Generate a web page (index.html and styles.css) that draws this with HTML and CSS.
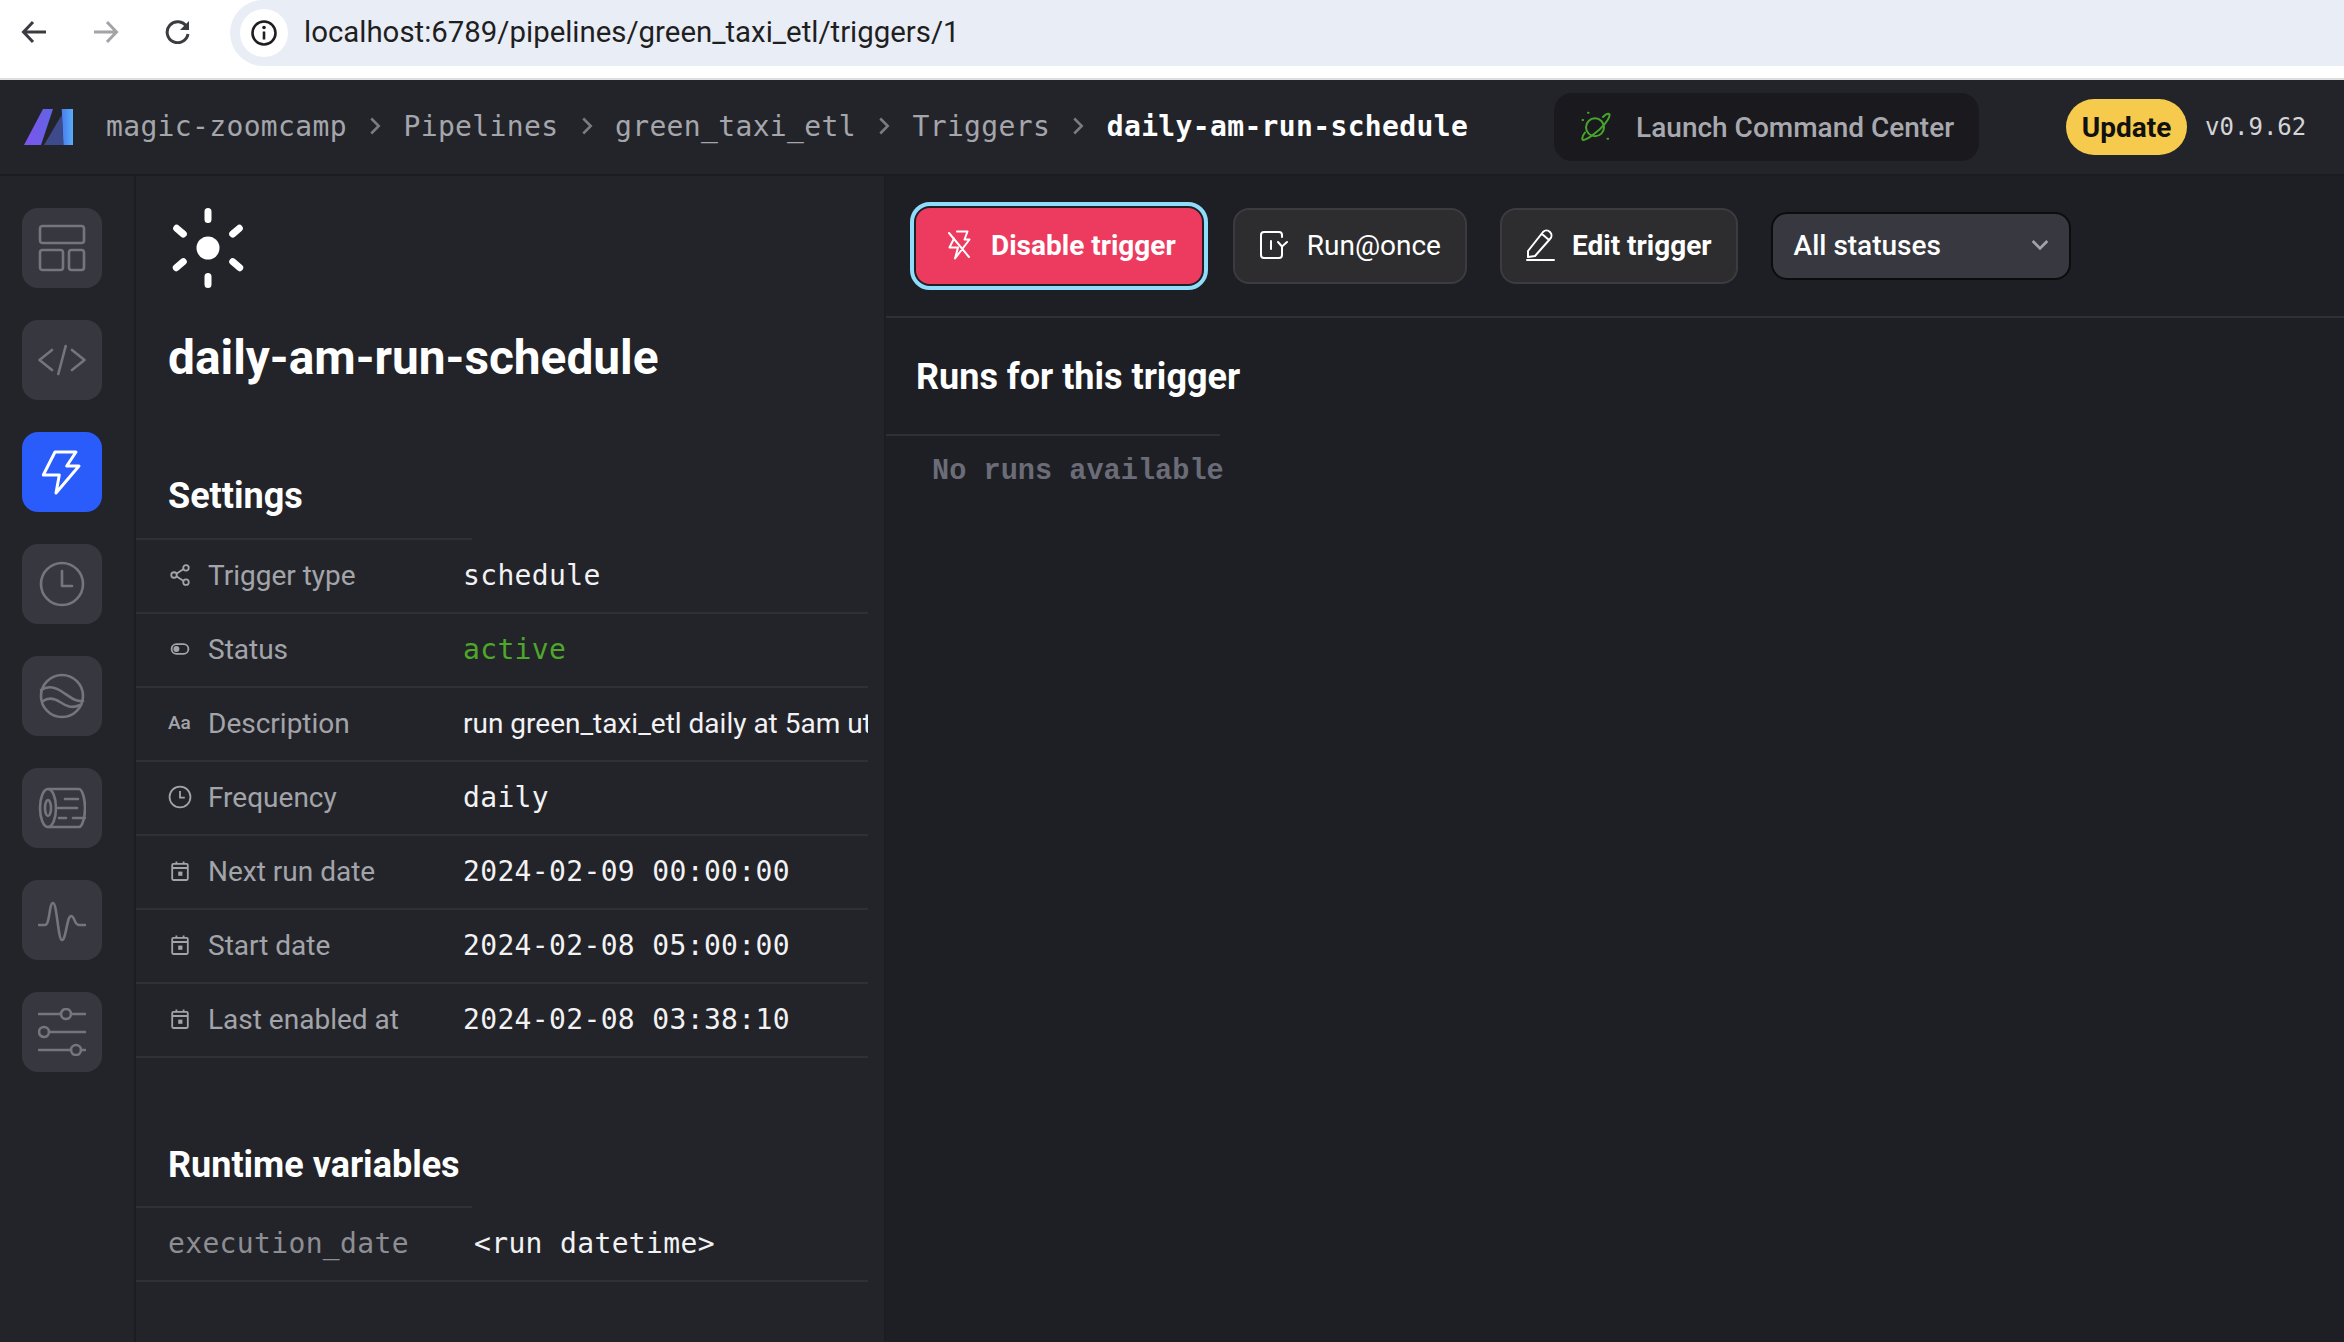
FILE: index.html
```html
<!DOCTYPE html>
<html lang="en">
<head>
    <meta charset="UTF-8">
    <title>daily-am-run-schedule</title>
    <link rel="stylesheet" href="styles.css">
</head>
<body>
    <!-- browser toolbar -->
    <div class="browser-bar">
        <svg class="nav-icon back" viewBox="0 0 26 24"><path d="M25 12H3M12 2 2.500 12 12 22"/></svg>
        <svg class="nav-icon forward" viewBox="0 0 26 24"><path d="M1 12h22M14 2l9.500 10L14 22"/></svg>
        <svg class="nav-icon reload" viewBox="0 0 26 24"><path d="M21.500 6.500A10.500 10.500 0 1 0 23 14"/><path class="fill-dark" d="M24 1v9h-9z"/></svg>
        <div class="address">
            <span class="site-info">
                <svg viewBox="0 0 28 28"><circle cx="14" cy="14" r="11.500"/><path d="M14 12.500v8"/><circle class="dot" cx="14" cy="8.500" r="1.800"/></svg>
            </span>
            <span class="url">localhost:6789/pipelines/green_taxi_etl/triggers/1</span>
        </div>
    </div>

    <!-- app header -->
    <header class="app-header">
        <svg class="logo" viewBox="0 0 49 38">
            <defs>
                <linearGradient id="logoLeft" x1="0" y1="0" x2="1" y2="0"><stop offset="0" stop-color="#7f52ee"/><stop offset="1" stop-color="#5f66e4"/></linearGradient>
                <linearGradient id="logoRight" x1="0" y1="0" x2="1" y2="0"><stop offset="0" stop-color="#4a7cf0"/><stop offset="1" stop-color="#58aef8"/></linearGradient>
            </defs>
            <path fill="url(#logoLeft)" d="M0 37 19 1h10L17 37z"/>
            <path fill="#3d4a8c" d="M20 37 37.700 7 39.500 37z"/>
            <path fill="url(#logoRight)" d="M37.700 1H49v36h-9.500z"/>
        </svg>
        <nav class="breadcrumbs">
            <span>magic-zoomcamp</span>
            <svg class="crumb-sep" viewBox="0 0 10 16"><path d="M2 2l6 6-6 6"/></svg>
            <span>Pipelines</span>
            <svg class="crumb-sep" viewBox="0 0 10 16"><path d="M2 2l6 6-6 6"/></svg>
            <span>green_taxi_etl</span>
            <svg class="crumb-sep" viewBox="0 0 10 16"><path d="M2 2l6 6-6 6"/></svg>
            <span>Triggers</span>
            <svg class="crumb-sep" viewBox="0 0 10 16"><path d="M2 2l6 6-6 6"/></svg>
            <span class="current">daily-am-run-schedule</span>
        </nav>
        <div class="command-center">
            <svg viewBox="0 0 30 32">
                <circle cx="14" cy="16.300" r="9"/>
                <path d="M22 6C26 2 29 2 28.500 4.500 28 9 20 18 13 23 7 28 2 30 1.500 28.500 1 27 2 24 4 21.500"/>
                <path d="M7 1.700h.6M1.500 9h.6M26.500 27.700h.6"/>
            </svg>
            <span>Launch Command Center</span>
        </div>
        <span class="update-pill">Update</span>
        <span class="version">v0.9.62</span>
    </header>

    <div class="main">
        <!-- icon sidebar -->
        <aside class="sidebar">
            <a class="side-btn">
                <svg viewBox="0 0 48 48"><rect x="2" y="2" width="44" height="17" rx="2.500"/><rect x="2" y="26" width="23" height="20" rx="2.500"/><rect x="31" y="26" width="15" height="20" rx="2.500"/></svg>
            </a>
            <a class="side-btn">
                <svg viewBox="0 0 48 48"><path d="M14 14 1.500 24 14 34M34 14l12.500 10L34 34M27.700 10l-7.400 28"/></svg>
            </a>
            <a class="side-btn active">
                <svg viewBox="0 0 48 48"><path d="M17 4h21L28.700 18H41L18 45l3.300-18h-16z"/></svg>
            </a>
            <a class="side-btn">
                <svg viewBox="0 0 48 48"><circle cx="24" cy="24" r="21"/><path d="M24 11v15h10"/></svg>
            </a>
            <a class="side-btn">
                <svg viewBox="0 0 48 48"><circle cx="24" cy="24" r="21"/><path d="M3 18c6-4 12-4 20 1s14 11 22 10M5 29c6-4 11-3 17 1s12 7 20 3"/></svg>
            </a>
            <a class="side-btn">
                <svg viewBox="0 0 48 48"><path d="M10 5h31c3 0 6 9 6 19s-3 19-6 19H10"/><ellipse cx="10" cy="24" rx="8" ry="19"/><ellipse cx="10" cy="24" rx="3" ry="8"/><path d="M27 15h13M20 24h19M21 34h7M35 34h12"/></svg>
            </a>
            <a class="side-btn">
                <svg viewBox="0 0 48 48"><path d="M1 29h6c5 0 4-22 8-22s5 37 9 37 5-24 9-24c4 0 3 9 8 9h6"/></svg>
            </a>
            <a class="side-btn">
                <svg viewBox="0 0 48 48"><path d="M1 6h22M33 6h14M11 24h36M1 42h32M43 42h4"/><circle cx="28" cy="6" r="5"/><circle cx="6" cy="24" r="5"/><circle cx="38" cy="42" r="5"/></svg>
            </a>
        </aside>

        <!-- trigger details -->
        <section class="detail-panel">
            <svg class="sun" viewBox="0 0 80 80">
                <circle cx="40" cy="40" r="11.500"/>
                <path d="M40 3.500v8M40 68.500v8M8.700 20.300l6.600 5.700M71.300 20.300 64.700 26M8.300 59.700l7-6M71.700 59.700l-7-6"/>
            </svg>
            <h1 class="trigger-name">daily-am-run-schedule</h1>

            <h2 class="section-title">Settings</h2>
            <div class="row">
                <span class="row-label">
                    <svg class="row-icon" viewBox="0 0 20 20"><circle cx="15" cy="4" r="2.300"/><circle cx="5" cy="10" r="2.300"/><circle cx="15" cy="16" r="2.300"/><path d="M7 9l6-4M7 11l6 4"/></svg>
                    Trigger type
                </span>
                <span class="row-value mono">schedule</span>
            </div>
            <div class="row">
                <span class="row-label">
                    <svg class="row-icon" viewBox="0 0 20 20"><rect x="3" y="6" width="14" height="8" rx="4"/><circle class="dot" cx="7" cy="10" r="2.500"/></svg>
                    Status
                </span>
                <span class="row-value mono active-text">active</span>
            </div>
            <div class="row">
                <span class="row-label">
                    <span class="row-icon aa">Aa</span>
                    Description
                </span>
                <span class="row-value">run green_taxi_etl daily at 5am utc</span>
            </div>
            <div class="row">
                <span class="row-label">
                    <svg class="row-icon" viewBox="0 0 20 20"><circle cx="10" cy="10" r="8.700"/><path d="M10 5v5.500h4"/></svg>
                    Frequency
                </span>
                <span class="row-value mono">daily</span>
            </div>
            <div class="row">
                <span class="row-label">
                    <svg class="row-icon" viewBox="0 0 20 20"><rect x="3.500" y="4" width="13" height="13.500" rx="1"/><path d="M3.500 7.500h13M7 2v2M13 2v2"/><rect class="dot" x="8.500" y="10.500" width="3.500" height="3.500"/></svg>
                    Next run date
                </span>
                <span class="row-value mono">2024-02-09 00:00:00</span>
            </div>
            <div class="row">
                <span class="row-label">
                    <svg class="row-icon" viewBox="0 0 20 20"><rect x="3.500" y="4" width="13" height="13.500" rx="1"/><path d="M3.500 7.500h13M7 2v2M13 2v2"/><rect class="dot" x="8.500" y="10.500" width="3.500" height="3.500"/></svg>
                    Start date
                </span>
                <span class="row-value mono">2024-02-08 05:00:00</span>
            </div>
            <div class="row">
                <span class="row-label">
                    <svg class="row-icon" viewBox="0 0 20 20"><rect x="3.500" y="4" width="13" height="13.500" rx="1"/><path d="M3.500 7.500h13M7 2v2M13 2v2"/><rect class="dot" x="8.500" y="10.500" width="3.500" height="3.500"/></svg>
                    Last enabled at
                </span>
                <span class="row-value mono">2024-02-08 03:38:10</span>
            </div>

            <h2 class="section-title runtime">Runtime variables</h2>
            <div class="row">
                <span class="var-name mono">execution_date</span>
                <span class="var-value mono">&lt;run datetime&gt;</span>
            </div>
        </section>

        <!-- runs -->
        <section class="runs-panel">
            <div class="action-bar">
                <button class="btn btn-disable">
                    <svg viewBox="0 0 24 32"><path d="M10 2.500h10.500l-3 8h5L8 29.500l3-11H2.500L7 9.500M2 4l20 24"/></svg>
                    Disable trigger
                </button>
                <button class="btn btn-run">
                    <svg viewBox="0 0 30 30"><path d="M23 7V5a3 3 0 0 0-3-3H5a3 3 0 0 0-3 3v20a3 3 0 0 0 3 3h15a3 3 0 0 0 3-3v-8M12 11v8M28 12l-5 4.500-4-4.500"/></svg>
                    Run@once
                </button>
                <button class="btn btn-edit">
                    <svg viewBox="0 0 30 32"><path d="M2 22 17 3c2-2 5-2 7 0s2 5 0 7L9 27l-7 1zM16 5l7 6M1 31h27"/></svg>
                    Edit trigger
                </button>
                <div class="status-select">
                    <span>All statuses</span>
                    <svg viewBox="0 0 16 10"><path d="M1.500 1.500 8 8l6.500-6.500"/></svg>
                </div>
            </div>
            <h2 class="runs-title">Runs for this trigger</h2>
            <p class="no-runs">No runs available</p>
        </section>
    </div>
</body>
</html>
```

FILE: styles.css
```css
* {
    margin: 0;
    padding: 0;
    box-sizing: border-box;
}

html, body {
    width: 2344px;
    height: 1342px;
    overflow: hidden;
}

body {
    background: #1e1f24;
    font-family: Roboto, 'Liberation Sans', sans-serif;
    color: #fff;
}

.mono {
    font-family: 'DejaVu Sans Mono', monospace;
}

/* browser toolbar */
.browser-bar {
    display: flex;
    align-items: flex-start;
    height: 80px;
    background: #fff;
    border-bottom: 2px solid #dfdfdf;
}

.nav-icon {
    width: 26px;
    height: 24px;
    margin-top: 20px;
    fill: none;
    stroke: #3a3c40;
    stroke-width: 3;
}

.nav-icon.back {
    margin-left: 21px;
}

.nav-icon.forward {
    margin-left: 46px;
    stroke: #a3a4a7;
}

.nav-icon.reload {
    margin-left: 46px;
}

.nav-icon .fill-dark {
    fill: #3a3c40;
    stroke: none;
}

.address {
    display: flex;
    align-items: center;
    flex: 1;
    height: 66px;
    margin-left: 39px;
    padding-left: 10px;
    background: #e9edf6;
    border-radius: 33px 0 0 33px;
}

.site-info {
    display: flex;
    align-items: center;
    justify-content: center;
    width: 48px;
    height: 48px;
    background: #fff;
    border-radius: 50%;
}

.site-info svg {
    width: 28px;
    height: 28px;
    fill: none;
    stroke: #1f1f1f;
    stroke-width: 2.6;
}

.site-info .dot {
    fill: #1f1f1f;
    stroke: none;
}

.url {
    margin-left: 16px;
    padding-bottom: 2px;
    font-size: 29.400px;
    color: #1f1f1f;
}

/* app header */
.app-header {
    display: flex;
    align-items: center;
    height: 96px;
    padding-left: 24px;
    background: #23242a;
    border-bottom: 2px solid #1b1c20;
}

.logo {
    width: 49px;
    height: 38px;
    flex-shrink: 0;
}

.breadcrumbs {
    display: flex;
    align-items: center;
    gap: 21.300px;
    margin-left: 33px;
    padding-bottom: 2px;
    font-family: 'DejaVu Sans Mono', monospace;
    font-size: 28px;
    letter-spacing: 0.35px;
    color: #a5a6ac;
}

.crumb-sep {
    width: 14px;
    height: 20px;
    fill: none;
    stroke: #7b7c83;
    stroke-width: 2;
}

.breadcrumbs .current {
    color: #fff;
    font-weight: 700;
}

.command-center {
    display: flex;
    align-items: center;
    gap: 25px;
    width: 425px;
    height: 68px;
    margin-left: 86px;
    padding-left: 27px;
    background: #1a1a1e;
    border-radius: 18px;
    font-size: 28px;
    font-weight: 500;
    color: #a8a9af;
}

.command-center svg {
    width: 30px;
    height: 32px;
    fill: none;
    stroke: #47a52c;
    stroke-width: 2;
    stroke-linecap: round;
}

.update-pill {
    display: flex;
    align-items: center;
    justify-content: center;
    width: 121px;
    height: 56px;
    margin-left: 87px;
    background: #f6ca4c;
    border-radius: 28px;
    font-size: 28px;
    font-weight: 700;
    color: #111;
}

.version {
    margin-left: 18px;
    font-family: 'DejaVu Sans Mono', monospace;
    font-size: 24px;
    color: #d4d4d8;
}

/* layout */
.main {
    display: flex;
    height: 1166px;
}

.sidebar {
    display: flex;
    flex-direction: column;
    gap: 32px;
    width: 136px;
    padding: 32px 0 0 22px;
    background: #232429;
    border-right: 2px solid #1c1d21;
}

.side-btn {
    display: flex;
    align-items: center;
    justify-content: center;
    width: 80px;
    height: 80px;
    background: #37383f;
    border-radius: 16px;
}

.side-btn svg {
    width: 48px;
    height: 48px;
    fill: none;
    stroke: #74757d;
    stroke-width: 2.600;
    stroke-linecap: round;
    stroke-linejoin: round;
}

.side-btn.active {
    background: #2a5bfb;
}

.side-btn.active svg {
    stroke: #fff;
    stroke-width: 3;
}

/* details */
.detail-panel {
    width: 750px;
    padding: 32px 16px 0 0;
    background: #232429;
    border-right: 2px solid #1c1d21;
}

.sun {
    display: block;
    width: 80px;
    height: 80px;
    margin-left: 32px;
    fill: #fff;
}

.sun path {
    fill: none;
    stroke: #fff;
    stroke-width: 7;
    stroke-linecap: round;
}

.trigger-name {
    margin: 40px 0 0 32px;
    font-size: 47.800px;
    line-height: 60px;
    font-weight: 700;
}

.section-title {
    width: 336px;
    margin-top: 86px;
    padding: 0 0 20px 32px;
    border-bottom: 2px solid #2f3036;
    font-size: 36px;
    line-height: 44px;
    font-weight: 700;
}

.section-title.runtime {
    margin-top: 85px;
    padding-bottom: 19px;
}

.row {
    display: flex;
    align-items: center;
    height: 74px;
    padding-bottom: 2px;
    border-bottom: 2px solid #2f3036;
    white-space: nowrap;
    overflow: hidden;
    font-size: 28px;
}

.row-label {
    display: flex;
    align-items: center;
    flex-shrink: 0;
    width: 327px;
    padding-left: 32px;
    color: #a3a4aa;
}

.row-icon {
    flex-shrink: 0;
    width: 24px;
    height: 24px;
    margin-right: 16px;
    fill: none;
    stroke: #a3a4aa;
    stroke-width: 1.500;
}

.row-icon .dot {
    fill: #a3a4aa;
    stroke: none;
}

.row-icon.aa {
    font-size: 19px;
    font-weight: 500;
    line-height: 24px;
}

.row-value {
    color: #f2f2f4;
}

.row-value.mono {
    letter-spacing: 0.35px;
}

.active-text {
    color: #4ea72a;
}

.var-name {
    flex-shrink: 0;
    width: 338px;
    padding-left: 32px;
    letter-spacing: 0.35px;
    color: #8d8e94;
}

.var-value {
    letter-spacing: 0.35px;
    color: #f2f2f4;
}

/* runs */
.runs-panel {
    flex: 1;
}

.action-bar {
    display: flex;
    align-items: center;
    gap: 33px;
    height: 142px;
    padding-left: 28px;
    border-bottom: 2px solid #2f3036;
}

.btn {
    display: flex;
    align-items: center;
    height: 76px;
    padding: 0 24px 2px;
    background: #2d2d2f;
    border: 2px solid #3c3c40;
    border-radius: 16px;
    font-family: inherit;
    font-size: 28px;
    color: #fff;
}

.btn svg {
    height: 32px;
    fill: none;
    stroke: #fff;
    stroke-width: 2;
    stroke-linecap: round;
    stroke-linejoin: round;
}

.btn-disable {
    height: 80px;
    margin-right: -4px;
    padding: 0 26px 2px 30px;
    gap: 19px;
    background: #ed3b5f;
    border-color: #1f2024;
    outline: 4px solid #8fdcfb;
    font-weight: 700;
}

.btn-disable svg {
    width: 26px;
}

.btn-run {
    gap: 18px;
}

.btn-run svg {
    width: 30px;
}

.btn-edit {
    gap: 16px;
    font-weight: 700;
}

.btn-edit svg {
    width: 30px;
}

.status-select {
    display: flex;
    align-items: center;
    justify-content: space-between;
    width: 300px;
    height: 68px;
    padding: 0 20px 2px 21px;
    background: #373840;
    border: 2px solid #0c0c0e;
    border-radius: 16px;
    font-size: 28px;
    font-weight: 500;
}

.status-select svg {
    width: 18px;
    height: 12px;
    fill: none;
    stroke: #a3a4aa;
    stroke-width: 2.500;
}

.runs-title {
    width: 334px;
    margin-top: 37px;
    padding: 0 0 35px 30px;
    border-bottom: 2px solid #2f3036;
    font-size: 36px;
    line-height: 44px;
    font-weight: 700;
    white-space: nowrap;
}

.no-runs {
    margin: 16px 0 0 46px;
    font-family: 'Liberation Mono', monospace;
    font-size: 28.600px;
    line-height: 40px;
    font-weight: 700;
    color: #6b6c78;
}
```
